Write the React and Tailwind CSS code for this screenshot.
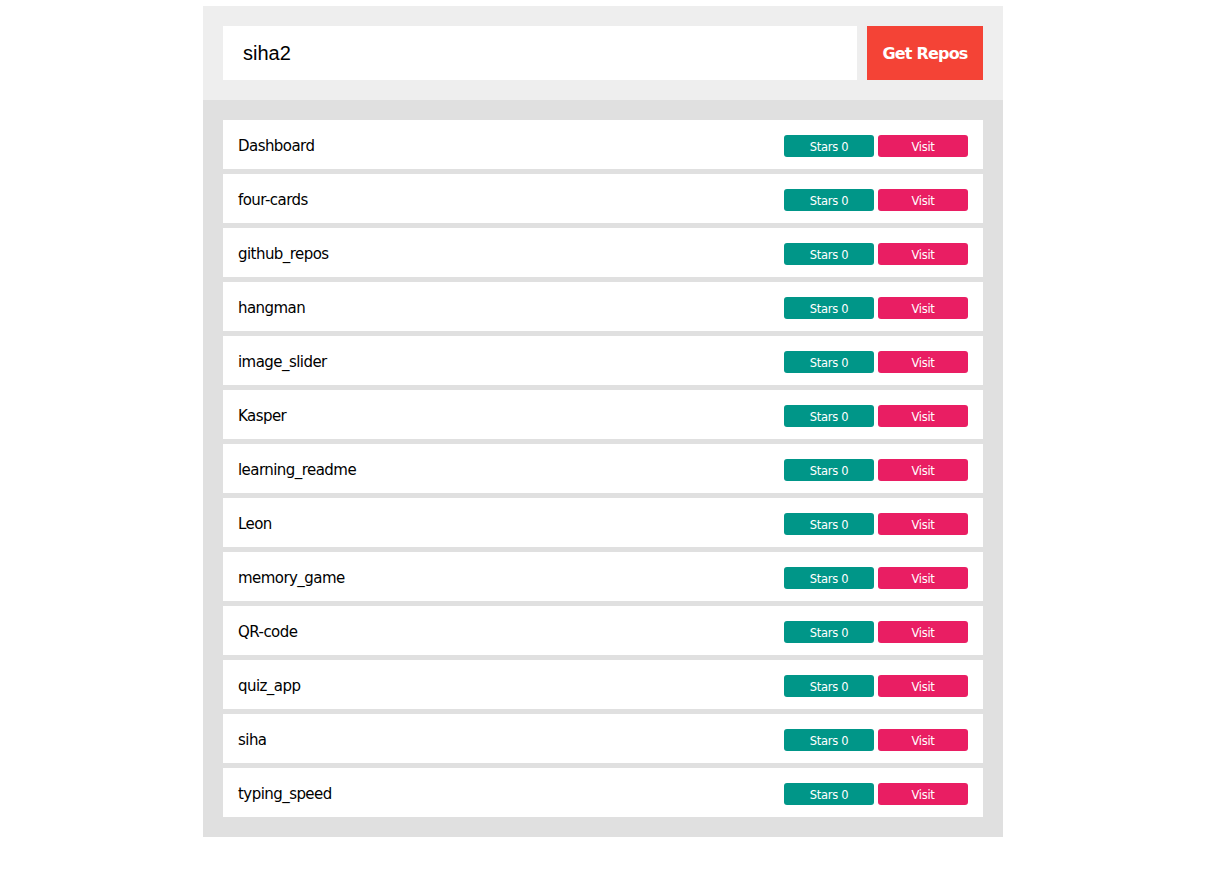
const repos = [
  'Dashboard',
  'four-cards',
  'github_repos',
  'hangman',
  'image_slider',
  'Kasper',
  'learning_readme',
  'Leon',
  'memory_game',
  'QR-code',
  'quiz_app',
  'siha',
  'typing_speed',
];

export default function App() {
  return (
    <div className="min-h-screen bg-white pt-[6px]">
      <div className="ml-[203px] w-[800px]" style={{ fontFamily: '"DejaVu Sans", Tahoma, sans-serif' }}>
        <div className="flex gap-[10px] bg-[#eeeeee] p-[20px]">
          <input
            className="h-[54px] flex-1 bg-white px-[20px] text-[20px] text-black outline-none"
            style={{ fontFamily: '"Liberation Sans", Arial, sans-serif' }}
            defaultValue="siha2"
          />
          <button className="h-[54px] w-[116px] bg-[#f44336] pt-[2px] text-[16px] font-bold tracking-[-0.8px] text-white">
            Get Repos
          </button>
        </div>
        <div className="flex flex-col gap-[5px] bg-[#e0e0e0] p-[20px]">
          {repos.map((name) => (
            <div key={name} className="flex h-[49px] items-center justify-between bg-white px-[15px]">
              <span className="pt-[4px] text-[15px] tracking-[-0.55px] text-black">{name}</span>
              <div className="flex gap-[4px] pt-[2px]">
                <span className="flex h-[22px] w-[90px] items-center justify-center rounded-[3px] bg-[#009688] pt-[4px] text-[11.5px] tracking-[-0.3px] text-white">
                  Stars 0
                </span>
                <span className="flex h-[22px] w-[90px] items-center justify-center rounded-[3px] bg-[#e91e63] pt-[4px] text-[11.5px] tracking-[-0.3px] text-white">
                  Visit
                </span>
              </div>
            </div>
          ))}
        </div>
      </div>
    </div>
  );
}
